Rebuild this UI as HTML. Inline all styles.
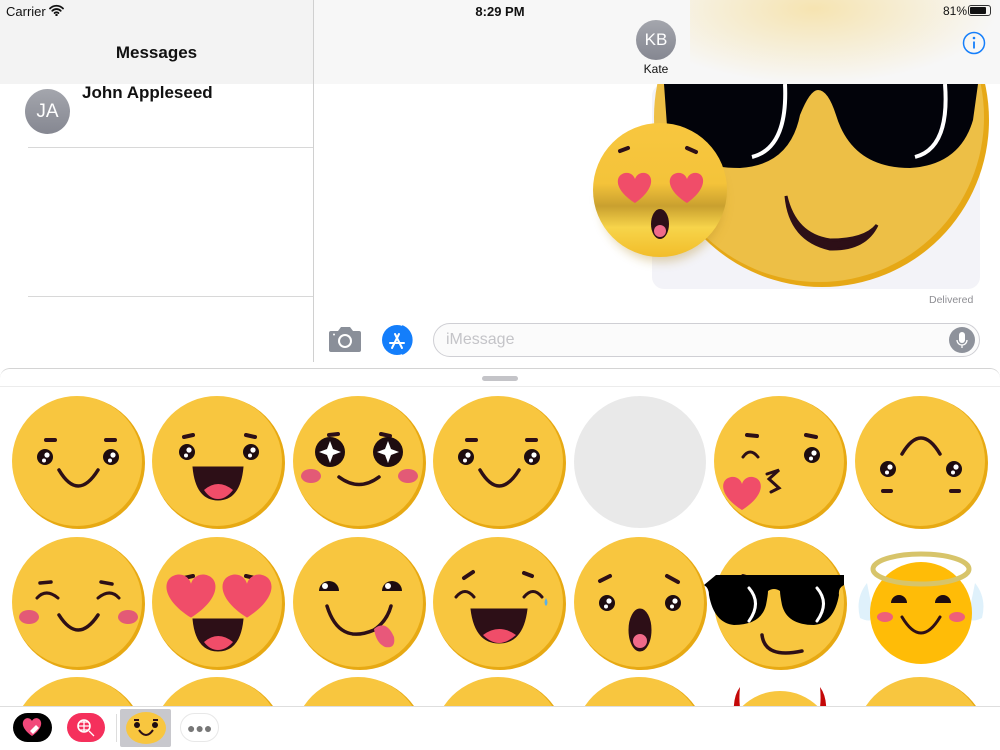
<!DOCTYPE html>
<html><head><meta charset="utf-8"><style>
*{margin:0;padding:0;box-sizing:border-box}
html,body{width:1000px;height:750px;overflow:hidden}
body{background:#fff;font-family:"Liberation Sans",sans-serif;position:relative}
.abs{position:absolute}
</style></head><body>
<div class="abs" style="left:0;top:0;width:313px;height:84px;background:#f3f3f3"></div>
<div class="abs" style="left:6px;top:4px;font-size:13px;color:#111">Carrier</div>
<svg class="abs" style="left:49px;top:4px" width="15" height="12" viewBox="0 0 15 12"><path d="M1 4.5a9 9 0 0 1 13 0M3.3 6.8a6 6 0 0 1 8.4 0M5.6 9a3 3 0 0 1 3.8 0" stroke="#111" stroke-width="1.8" fill="none" stroke-linecap="round"/><circle cx="7.5" cy="11" r="1.2" fill="#111"/></svg>
<div class="abs" style="left:0;top:43px;width:313px;text-align:center;font-size:17px;font-weight:bold;color:#111">Messages</div>
<div class="abs" style="left:25px;top:89px;width:45px;height:45px;border-radius:50%;background:linear-gradient(#a4a6ad,#858791);color:#fff;font-size:19px;line-height:45px;text-align:center">JA</div>
<div class="abs" style="left:82px;top:83px;font-size:17px;font-weight:bold;color:#111">John Appleseed</div>
<div class="abs" style="left:28px;top:147px;width:285px;height:1px;background:#d8d8d8"></div>
<div class="abs" style="left:28px;top:296px;width:285px;height:1px;background:#d8d8d8"></div>
<div class="abs" style="left:313px;top:0;width:1px;height:362px;background:#d0d0d0"></div>

<div class="abs" style="left:652px;top:84px;width:328px;height:205px;border-radius:12px;background:#f3f3f8"></div>
<svg class="abs" style="left:580px;top:84px" width="420" height="220" viewBox="580 84 420 220">
<defs><clipPath id="bc"><rect x="580" y="84" width="420" height="210"/></clipPath>
<linearGradient id="gold" x1="0" y1="0" x2="0" y2="1"><stop offset="0" stop-color="#f8c73f"/><stop offset=".45" stop-color="#f4c33a"/><stop offset=".62" stop-color="#c9a02f"/><stop offset=".78" stop-color="#f7d44a"/><stop offset="1" stop-color="#f2bd2a"/></linearGradient>
<filter id="sh"><feGaussianBlur stdDeviation="5"/></filter></defs>
<g clip-path="url(#bc)">
<circle cx="822" cy="120" r="167" fill="#e6a816"/>
<circle cx="819" cy="117" r="165" fill="#edbf46"/>
<path d="M664 84 L668 140 Q690 168 740 168 Q790 165 800 115 Q810 90 818 90 Q828 90 836 115 Q852 168 910 168 Q960 165 973 120 L978 84Z" fill="#02030a"/>
<path d="M785 84 Q788 148 752 157" stroke="#fff" stroke-width="4" fill="none"/>
<path d="M945 84 Q950 148 915 157" stroke="#fff" stroke-width="4" fill="none"/>
<path d="M786 196 Q790 240 830 249 Q865 250 877 225 Q865 240 830 240 Q795 235 786 196Z" fill="#2d0f17" stroke="#2d0f17" stroke-width="3"/>
</g>
<ellipse cx="662" cy="200" rx="62" ry="62" fill="#b08820" opacity=".35" filter="url(#sh)"/>
<circle cx="660" cy="190" r="67" fill="url(#gold)"/>
<path d="M620 151l8-3M687 148l9 4" stroke="#2d0f17" stroke-width="4" stroke-linecap="round"/>
<path d="M635 203c-22-14-20-28-10-30 6-1 9 3 10 6 1-3 4-7 10-6 9 2 10 16-10 30z" fill="#f04d69"/>
<path d="M687 203c-22-14-20-28-10-30 6-1 9 3 10 6 1-3 4-7 10-6 9 2 10 16-10 30z" fill="#f04d69"/>
<ellipse cx="660" cy="224" rx="9" ry="15" fill="#2d0f17"/><ellipse cx="660" cy="231" rx="6" ry="6" fill="#f06b8a"/>
</svg>
<div class="abs" style="left:929px;top:294px;font-size:10.5px;color:#8e8e93">Delivered</div>

<div class="abs" style="left:314px;top:0;width:686px;height:84px;background:#f7f7f7"></div>
<div class="abs" style="left:690px;top:-10px;width:310px;height:94px;background:radial-gradient(ellipse at 40% 20%,rgba(245,215,130,.6),rgba(247,247,247,0) 70%)"></div>
<div class="abs" style="left:314px;top:4px;width:372px;text-align:center;font-size:13px;font-weight:bold;color:#111">8:29 PM</div>
<div class="abs" style="left:943px;top:4px;font-size:12px;color:#111">81%</div>
<div class="abs" style="left:968px;top:5px;width:23px;height:11px;border:1px solid #333;border-radius:3px;padding:1px"><div style="width:16px;height:7px;background:#111;border-radius:1px"></div></div>
<div class="abs" style="left:636px;top:20px;width:40px;height:40px;border-radius:50%;background:linear-gradient(#a4a6ad,#858791);color:#fff;font-size:17px;line-height:40px;text-align:center">KB</div>
<div class="abs" style="left:616px;top:62px;width:80px;text-align:center;font-size:12px;color:#111">Kate</div>
<svg class="abs" style="left:962px;top:31px" width="24" height="24" viewBox="0 0 24 24"><circle cx="12" cy="12" r="10.5" stroke="#147efb" stroke-width="1.5" fill="none"/><circle cx="12" cy="7" r="1.3" fill="#147efb"/><path d="M12 10.5v7" stroke="#147efb" stroke-width="1.8"/></svg>

<svg class="abs" style="left:328px;top:326px" width="34" height="27" viewBox="0 0 34 27"><path d="M3 5h7l3-4h9l3 4h6a2 2 0 0 1 2 2v17a2 2 0 0 1-2 2H3a2 2 0 0 1-2-2V7a2 2 0 0 1 2-2z" fill="#8a8f99"/><circle cx="17" cy="15" r="7" fill="#fff"/><circle cx="17" cy="15" r="5" fill="#8a8f99"/><circle cx="6" cy="8.5" r="1" fill="#fff"/></svg>
<svg class="abs" style="left:381px;top:324px" width="36" height="32" viewBox="0 0 36 32"><path d="M21 2a15 15 0 0 1 0 28" stroke="#147efb" stroke-width="2" fill="none"/><circle cx="16" cy="16" r="15" fill="#147efb"/><path d="M11 24l7-14M21 24l-7-14M9 19h14" stroke="#fff" stroke-width="2" stroke-linecap="round"/></svg>
<div class="abs" style="left:433px;top:323px;width:547px;height:34px;border:1px solid #cfcfd4;border-radius:17px;background:#fbfbfb"></div>
<div class="abs" style="left:446px;top:331px;font-size:16px;color:#c4c4c8">iMessage</div>
<svg class="abs" style="left:949px;top:327px" width="26" height="26" viewBox="0 0 26 26"><circle cx="13" cy="13" r="13" fill="#8e929b"/><rect x="10" y="5" width="6" height="11" rx="3" fill="#fff"/><path d="M8 13a5 5 0 0 0 10 0M13 18v3" stroke="#fff" stroke-width="1.3" fill="none"/></svg>

<div class="abs" style="left:0;top:368px;width:1000px;height:382px;background:#fff;border-top:1px solid #d4d4d4;border-radius:10px 10px 0 0"></div>
<div class="abs" style="left:482px;top:376px;width:36px;height:5px;border-radius:3px;background:#c4c4c8"></div>
<div class="abs" style="left:0;top:386px;width:1000px;height:1px;background:#ececec"></div>

<svg class="abs" style="left:0;top:387px" width="1000" height="319" viewBox="0 387 1000 319">
<defs>
<g id="b" stroke="none"><circle cx="1" cy="1" r="66" fill="#e7a913"/><circle cx="-1" cy="-1" r="65" fill="#f8c63f"/></g>
<g id="e" stroke="none"><circle r="8" fill="#1e0c10"/><circle cx="2" cy="-2" r="2.6" fill="#fff"/><circle cx="-1" cy="3.5" r="2" fill="#fff"/></g>
<path id="h" stroke="none" d="M0 22c-24-15-22-31-11-33 6-1 10 3 11 7 1-4 5-8 11-7 11 2 13 18-11 33z" fill="#f04d69"/>
</defs>
<g fill="none" stroke="#2d0f17" stroke-linecap="round">
<g transform="translate(78,462)"><use href="#b"/><path d="M-32-22h9M28-22h9" stroke-width="4"/><use href="#e" x="-33" y="-5"/><use href="#e" x="33" y="-5"/><path d="M-19 8Q0 40 20 8" stroke-width="3.5"/></g>
<g transform="translate(218,462)"><use href="#b"/><path d="M-34-25l9-2M28-27l9 2" stroke-width="4"/><use href="#e" x="-31" y="-10"/><use href="#e" x="33" y="-10"/><path d="M-25 5h50Q22 38 0 38Q-22 38-25 5z" fill="#2d0f17"/><path d="M-14 28Q0 16 15 28Q8 37 0 37Q-8 37-14 28z" fill="#f04d69" stroke="none"/></g>
<g transform="translate(359,462)"><use href="#b"/><path d="M-30-27l9-1M22-28l9 2" stroke-width="4"/><circle cx="-29" cy="-10" r="15" fill="#1e0c10" stroke="none"/><circle cx="29" cy="-10" r="15" fill="#1e0c10" stroke="none"/><path d="M-29-21l3 8 8 3-8 3-3 8-3-8-8-3 8-3zM29-21l3 8 8 3-8 3-3 8-3-8-8-3 8-3z" fill="#fff" stroke="none"/><ellipse cx="-48" cy="14" rx="10" ry="7" fill="#e35a76" stroke="none"/><ellipse cx="49" cy="14" rx="10" ry="7" fill="#e35a76" stroke="none"/><path d="M-20 15Q0 30 20 15" stroke-width="3.5"/></g>
<g transform="translate(499,462)"><use href="#b"/><path d="M-32-22h9M28-22h9" stroke-width="4"/><use href="#e" x="-33" y="-5"/><use href="#e" x="33" y="-5"/><path d="M-19 8Q0 40 20 8" stroke-width="3.5"/></g>
<circle cx="640" cy="462" r="66" fill="#e9e9e9" stroke="none"/>
<g transform="translate(780,462)"><use href="#b"/><path d="M-33-27l10 1M26-27l10 2" stroke-width="4"/><path d="M-37-5Q-30-15-22-5" stroke-width="3"/><use href="#e" x="32" y="-7"/><g transform="translate(-38,26)"><use href="#h"/></g><path d="M-13 12l12-4-10 9 10 9-8 4" stroke-width="3"/></g>
<g transform="translate(921,462)"><use href="#b"/><path d="M-19-8Q0-40 19-8" stroke-width="3.5"/><use href="#e" x="-33" y="7"/><use href="#e" x="33" y="7"/><path d="M-38 29h8M30 29h8" stroke-width="4"/></g>
<g transform="translate(78,603)"><use href="#b"/><path d="M-38-20l11-1M23-21l11 2" stroke-width="3.5"/><path d="M-41-5Q-32-15-20-5M20-5Q32-15 41-5" stroke-width="3"/><ellipse cx="-49" cy="14" rx="10" ry="7" fill="#e35a76" stroke="none"/><ellipse cx="50" cy="14" rx="10" ry="7" fill="#e35a76" stroke="none"/><path d="M-19 12Q0 42 20 12" stroke-width="3.5"/></g>
<g transform="translate(218,603)"><use href="#b"/><path d="M-34-25l9-2M28-27l9 2" stroke-width="4"/><g transform="translate(-27,-14)"><use href="#h" transform="scale(1.3)"/></g><g transform="translate(29,-14)"><use href="#h" transform="scale(1.3)"/></g><path d="M-25 16h50Q22 48 0 48Q-22 48-25 16z" fill="#2d0f17"/><path d="M-14 39Q0 27 15 39Q8 47 0 47Q-8 47-14 39z" fill="#f04d69" stroke="none"/></g>
<g transform="translate(359,603)"><use href="#b"/><path d="M-40-12a10 10 0 0 1 20 0z" fill="#1e0c10" stroke="none"/><path d="M23-12a10 10 0 0 1 20 0z" fill="#1e0c10" stroke="none"/><circle cx="-34" cy="-17" r="3" fill="#fff" stroke="none"/><circle cx="29" cy="-17" r="3" fill="#fff" stroke="none"/><path d="M-32 3Q-20 42 15 27Q28 18 32 3" stroke-width="3.5"/><path d="M15 26q12-10 20 8q2 12-9 10q-9-4-11-18z" fill="#e8587a" stroke="none"/></g>
<g transform="translate(499,603)"><use href="#b"/><path d="M-35-25l9-6M25-30l8 3" stroke-width="4"/><path d="M-43-6Q-34-17-25-6M25-6Q34-17 43-6" stroke-width="3"/><path d="M-28 6h56Q24 40 0 40Q-24 40-28 6z" fill="#2d0f17"/><path d="M-16 32Q0 20 17 32Q8 40 0 40Q-8 40-16 32z" fill="#f04d69" stroke="none"/><path d="M47 -5q3 5 0 8q-3-3 0-8z" fill="#5ab0e8" stroke="none"/></g>
<g transform="translate(640,603)"><use href="#b"/><path d="M-40-22l10-5M27-27l11 6" stroke-width="4"/><use href="#e" x="-33" y="0"/><use href="#e" x="33" y="0"/><ellipse cx="0" cy="27" rx="11" ry="21" fill="#2d0f17"/><ellipse cx="0" cy="38" rx="7" ry="7" fill="#f06b8a" stroke="none"/></g>
<g transform="translate(780,603)"><use href="#b"/><path d="M-37-27l10 3" stroke-width="4"/><path d="M-64-28h128v10q-6 3-5 10q-5 28-25 30q-27 0-32-20q-2-10-2-14q-6-4-12 0q0 4-2 14q-5 20-32 20q-20-2-25-30q0-7-5-10z" fill="#000" stroke="none"/><path d="M-31-15Q-18 0-31 18M37-15Q50 0 37 18" stroke="#fff" stroke-width="3"/><path d="M-18 32Q-15 56 22 48" stroke-width="3.5"/></g>
<g transform="translate(921,603)"><path d="M-54-20q-12 15-7 35q10 5 14 0M54-20q12 15 7 35q-10 5-14 0" fill="#dff1fb" stroke="none"/><circle r="51" fill="#ffbc07" stroke="none" cy="10"/><ellipse cy="-34" rx="48" ry="15" fill="none" stroke="#d7c46a" stroke-width="5"/><path d="M-30 0a8 8 0 0 1 16 0zM14 0a8 8 0 0 1 16 0z" fill="#1e0c10" stroke="none"/><ellipse cx="-36" cy="14" rx="8" ry="5" fill="#ef5f7a" stroke="none"/><ellipse cx="36" cy="14" rx="8" ry="5" fill="#ef5f7a" stroke="none"/><path d="M-19 14Q0 46 19 14" stroke-width="3"/></g>
<use href="#b" x="78" y="743"/><use href="#b" x="218" y="743"/><use href="#b" x="359" y="743"/>
<g transform="translate(499,743)"><use href="#b"/><path d="M-35-23h8M28-23h8" stroke-width="4"/></g>
<g transform="translate(640,743)"><use href="#b"/><path d="M-40-22l10-5M27-27l11 6" stroke-width="4"/></g>
<g transform="translate(780,743)"><path d="M-40-56q-9 12-5 36l8-4q-5-12-3-32zM40-56q9 12 5 36l-8-4q5-12 3-32z" fill="#c40808" stroke="none"/><circle cy="2" r="54" fill="#f8c63f" stroke="none"/></g>
<use href="#b" x="921" y="743"/>
</g>
</svg>

<div class="abs" style="left:0;top:706px;width:1000px;height:44px;background:#fff;border-top:1px solid #dedede"></div>
<div class="abs" style="left:13px;top:713px;width:39px;height:29px;border-radius:15px;background:#000"></div>
<svg class="abs" style="left:20px;top:716px" width="24" height="22" viewBox="0 0 24 22"><path d="M12 20C2 13 1 6 5 3c3-2 6 0 7 2 1-2 4-4 7-2 4 3 3 10-7 17z" fill="#f2487a"/><path d="M10 15l6-6 3 3-6 6z" fill="#fff"/></svg>
<div class="abs" style="left:67px;top:713px;width:38px;height:29px;border-radius:15px;background:#f5305c"></div>
<svg class="abs" style="left:74px;top:716px" width="24" height="24" viewBox="0 0 24 24"><circle cx="10" cy="10" r="6" stroke="#fff" stroke-width="1.6" fill="none"/><path d="M4 10h12M10 4v12M6 6h8M6 14h8M15 15l5 5" stroke="#fff" stroke-width="1.3"/></svg>
<div class="abs" style="left:116px;top:714px;width:1px;height:28px;background:#ddd"></div>
<div class="abs" style="left:120px;top:709px;width:51px;height:38px;background:#c8c8cd;border-radius:2px"></div>
<svg class="abs" style="left:125px;top:711px" width="42" height="34" viewBox="0 0 42 34"><ellipse cx="21" cy="17" rx="20" ry="16" fill="#f8c63f"/><path d="M9 9h5M28 9h5" stroke="#2d0f17" stroke-width="2"/><circle cx="12" cy="14" r="3" fill="#1e0c10"/><circle cx="30" cy="14" r="3" fill="#1e0c10"/><path d="M14 19q7 10 14 0" stroke="#2d0f17" stroke-width="2" fill="none"/></svg>
<div class="abs" style="left:180px;top:713px;width:39px;height:29px;border-radius:15px;background:#fff;border:1px solid #e8e8e8"></div>
<div class="abs" style="left:187px;top:720px;font-size:14px;color:#777;font-weight:bold">●●●</div>
</body></html>
